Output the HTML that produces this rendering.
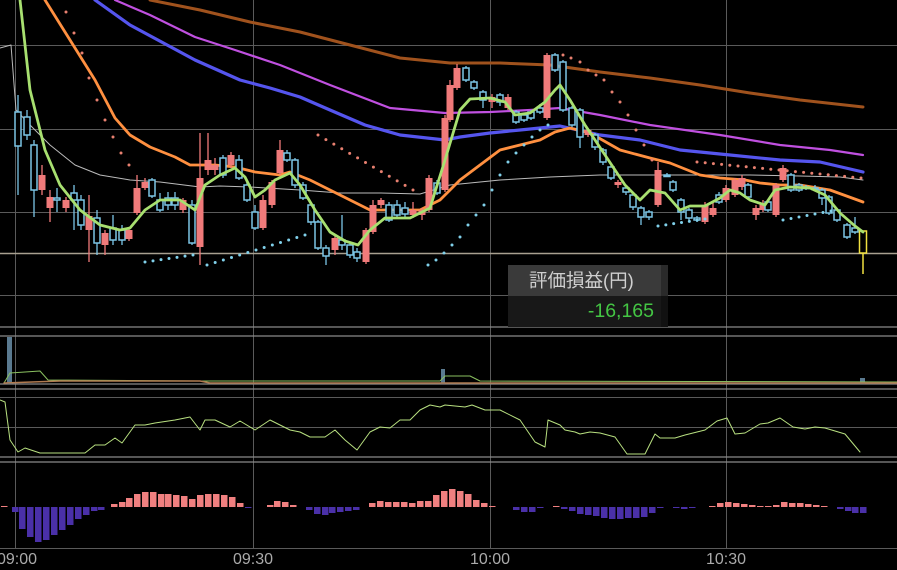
<!DOCTYPE html>
<html><head><meta charset="utf-8"><style>
html,body{margin:0;padding:0;background:#000;width:897px;height:570px;overflow:hidden}
svg{display:block}
.tt{position:absolute;left:508px;top:265px;width:160px;font-family:"Liberation Sans","Noto Sans CJK JP",sans-serif}
.tt .h{background:#3a3a3a;color:#d0d0d0;font-size:18.5px;height:31px;line-height:31px;padding-left:21px;border-right:7px solid #2a2a2a;white-space:nowrap}
.tt .v{background:#181818;color:#44c644;font-size:19.5px;height:31px;line-height:31px;text-align:right;padding-right:7px;border-right:7px solid #111}
</style></head><body>
<svg id="s" width="897" height="570" xmlns="http://www.w3.org/2000/svg">
<g stroke="#5a5a5a" stroke-width="1">
<line x1="15.5" y1="0" x2="15.5" y2="548"/><line x1="253.5" y1="0" x2="253.5" y2="548"/>
<line x1="490.5" y1="0" x2="490.5" y2="548"/><line x1="726.5" y1="0" x2="726.5" y2="548"/>
<line x1="0" y1="45.5" x2="897" y2="45.5"/><line x1="0" y1="129.5" x2="897" y2="129.5"/>
<line x1="0" y1="212.5" x2="897" y2="212.5"/><line x1="0" y1="295.5" x2="897" y2="295.5"/>
<line x1="0" y1="397.5" x2="897" y2="397.5"/><line x1="0" y1="427.5" x2="897" y2="427.5"/>
<line x1="0" y1="548.5" x2="897" y2="548.5"/>
</g>
<g stroke="#8a8a8a" stroke-width="1.2">
<line x1="0" y1="327" x2="897" y2="327"/><line x1="0" y1="336" x2="897" y2="336"/>
<line x1="0" y1="384" x2="897" y2="384"/><line x1="0" y1="389" x2="897" y2="389"/>
<line x1="0" y1="457" x2="897" y2="457"/><line x1="0" y1="462" x2="897" y2="462"/>
</g>
<line x1="0" y1="253.5" x2="897" y2="253.5" stroke="#a8a090" stroke-width="1.5"/>
<g id="main"></g>
<g font-family="Liberation Sans,sans-serif" font-size="16" fill="#aaa" text-anchor="middle">
<text x="17" y="564">09:00</text><text x="253" y="564">09:30</text><text x="490" y="564">10:00</text><text x="726" y="564">10:30</text>
</g>
</svg>
<div class="tt"><div class="h">評価損益(円)</div><div class="v">-16,165</div></div>
<script>
var g=document.getElementById('main'),h='';
function pl(p,c,w){h+='<polyline fill="none" stroke="'+c+'" stroke-width="'+w+'" stroke-linejoin="round" stroke-linecap="round" points="'+p.map(function(a){return a.join(',')}).join(' ')+'"/>';}
pl([[0,48],[11,45],[16,110],[30,125],[50,145],[75,165],[100,175],[130,180],[160,182],[200,187],[220,186],[250,187],[300,190],[340,193],[380,193],[420,194],[450,185],[500,180],[550,177],[600,175],[650,175],[700,175],[750,175],[800,176],[840,177],[863,180]],'#bbb',1);
pl([[150,0],[200,10],[250,22],[300,32],[350,45],[400,58],[450,63],[500,63],[550,65],[600,72],[650,78],[700,85],[750,93],[800,100],[863,107]],'#a0521d',3);
pl([[115,0],[150,15],[195,37],[235,50],[280,65],[330,85],[390,108],[445,113],[490,112],[530,110],[560,108],[600,115],[650,125],[720,135],[780,145],[830,150],[863,155]],'#c050e0',2.2);
pl([[95,0],[130,25],[195,60],[240,80],[270,88],[300,97],[330,110],[365,125],[400,135],[445,140],[460,137],[490,133],[520,130],[540,128],[560,126],[600,135],[640,140],[680,150],[730,155],[780,160],[820,162],[863,172]],'#5555ee',3.2);
pl([[45,0],[70,40],[95,80],[115,118],[130,135],[150,147],[175,157],[190,165],[215,165],[235,167],[255,172],[280,175],[290,172],[310,180],[330,190],[350,200],[370,210],[400,210],[420,210],[440,200],[460,180],[480,165],[500,150],[520,145],[540,140],[555,132],[570,128],[590,133],[620,150],[650,158],[670,163],[700,175],[720,178],[745,180],[760,183],[780,185],[800,185],[830,190],[863,202]],'#ff9040',2.8);
var C=[[18,146,112,95,195,0],[27,135,117,110,140,0],[34,145,190,140,217,0],[42,190,175,165,195,1],[50,208,197,190,222,1],[57,198,200,188,212,0],[66,208,200,197,212,1],[74,193,200,185,230,0],[81,200,225,195,230,0],[89,230,216,195,262,1],[97,218,243,210,255,0],[105,245,233,230,255,1],[113,228,240,215,245,0],[122,230,240,225,245,0],[129,239,230,228,241,1],[137,213,188,175,215,1],[145,188,182,178,190,1],[152,180,196,178,198,0],[160,200,210,193,212,0],[168,198,205,192,210,0],[175,198,205,192,210,0],[183,210,200,198,213,1],[192,205,243,200,245,0],[200,247,178,133,265,1],[208,170,160,133,175,1],[215,170,165,158,175,1],[223,158,175,155,178,0],[231,165,155,152,168,1],[239,160,178,155,180,0],[247,185,200,182,202,0],[255,212,228,205,230,0],[263,228,200,195,230,1],[272,205,182,180,208,1],[280,173,150,140,175,1],[287,153,160,150,162,0],[295,160,185,158,188,0],[303,185,198,182,200,0],[311,205,222,202,225,0],[318,222,248,220,250,0],[326,248,256,245,265,0],[335,250,238,235,255,1],[342,240,245,215,250,0],[350,245,255,242,258,0],[357,252,258,248,262,0],[366,262,230,228,264,1],[373,232,205,200,234,1],[381,205,200,198,208,1],[389,205,220,202,222,0],[397,205,215,200,218,0],[405,208,214,202,218,0],[413,215,210,202,218,1],[422,215,210,208,220,1],[429,210,178,175,212,1],[437,183,193,180,195,0],[445,190,118,115,192,1],[450,120,85,80,122,1],[457,88,68,64,90,1],[466,68,80,66,82,0],[474,82,88,80,90,0],[483,92,100,90,108,0],[492,102,97,94,108,1],[500,95,102,93,106,0],[508,108,97,94,110,1],[516,112,122,110,124,0],[524,115,120,113,122,0],[531,112,118,110,120,0],[540,108,112,104,114,0],[547,118,55,53,120,1],[555,55,70,53,72,0],[563,62,110,60,112,0],[572,108,125,106,127,0],[580,110,137,108,148,0],[588,135,130,128,137,1],[595,135,147,133,150,0],[603,150,162,148,165,0],[611,167,178,165,180,0],[618,185,182,180,188,1],[626,188,192,185,195,0],[633,195,207,193,210,0],[641,208,217,206,225,0],[649,212,217,210,220,0],[658,205,170,162,207,1],[667,175,175,173,177,0],[673,182,190,180,192,0],[681,200,212,198,220,0],[689,210,218,208,220,0],[697,218,220,216,222,0],[705,222,205,202,224,1],[713,215,208,203,217,1],[719,195,202,192,204,0],[726,200,188,185,202,1],[735,195,180,178,197,1],[742,187,178,175,190,1],[748,185,197,183,199,0],[756,215,208,205,220,1],[763,210,203,200,212,1],[768,202,210,200,212,0],[776,215,185,183,217,1],[783,180,168,165,182,1],[791,175,190,173,192,0],[799,185,190,183,192,0],[806,187,188,185,190,0],[815,188,188,185,190,0],[822,190,198,188,205,0],[829,197,213,195,215,0],[837,210,220,208,222,0],[847,225,237,223,239,0],[855,228,232,217,234,0]];
C.forEach(function(c){var x=c[0],t=Math.min(c[1],c[2]),b=Math.max(c[1],c[2]);if(b-t<1.5)b=t+1.5;
var col=c[5]?'#f07a7a':'#7cc6e6';
h+='<line x1="'+x+'" y1="'+c[4]+'" x2="'+x+'" y2="'+c[3]+'" stroke="'+col+'" stroke-width="1.3"/>';
if(c[5])h+='<rect x="'+(x-3.5)+'" y="'+t+'" width="7" height="'+(b-t)+'" fill="'+col+'"/>';
else h+='<rect x="'+(x-3)+'" y="'+t+'" width="6" height="'+(b-t)+'" fill="#000" stroke="'+col+'" stroke-width="1.5"/>';});
h+='<line x1="863" y1="231" x2="863" y2="274" stroke="#f0e040" stroke-width="1.5"/><rect x="859.5" y="231" width="7" height="22" fill="#000" stroke="#f0e040" stroke-width="1.5"/>';
pl([[20,0],[30,90],[45,150],[60,185],[80,210],[100,225],[120,230],[130,228],[145,210],[160,200],[180,200],[195,210],[205,185],[220,175],[235,168],[245,177],[255,197],[265,190],[275,180],[290,173],[300,185],[315,210],[330,232],[345,241],[358,245],[370,230],[385,218],[410,218],[430,208],[445,160],[460,110],[470,99],[490,98],[505,102],[515,115],[530,113],[545,102],[555,90],[560,85],[570,100],[585,125],[605,155],[625,185],[640,200],[650,190],[665,193],[680,210],[690,206],[705,206],[720,198],[730,190],[740,193],[750,200],[765,205],[775,190],[790,187],[810,188],[825,195],[840,213],[855,226],[863,232]],'#a8e070',2.8);
function dots(x0,y0,x1,y1,n,c){for(var i=0;i<n;i++){var t=n>1?i/(n-1):0;h+='<circle cx="'+(x0+(x1-x0)*t)+'" cy="'+(y0+(y1-y0)*t)+'" r="1.5" fill="'+c+'"/>';}}
var P='#e88070',B='#80d0ea';
[[66,12],[74,33],[82,53],[89,78],[97,100],[105,120],[113,137],[121,153],[129,165]].forEach(function(p){dots(p[0],p[1],p[0],p[1],1,P)});
dots(318,135,413,190,13,P);dots(145,262,193,255,7,B);dots(207,265,305,235,13,B);
[[428,265],[436,260],[444,253],[452,245],[460,237],[468,225],[476,215],[484,205],[492,190],[500,175],[508,162],[516,153],[524,145],[532,137],[540,130],[548,125]].forEach(function(p){dots(p[0],p[1],p[0],p[1],1,B)});
[[563,55],[571,58],[580,62],[588,70],[596,75],[604,80],[612,92],[620,102],[628,115],[636,130],[644,145],[652,160]].forEach(function(p){dots(p[0],p[1],p[0],p[1],1,P)});
dots(697,162,861,178,21,P);dots(658,226,705,219,7,B);dots(783,220,831,211,7,B);
h+='<rect x="7" y="337" width="5" height="47" fill="#5a7a90"/><rect x="441" y="369" width="4" height="15" fill="#5a7a90"/><rect x="860" y="378" width="5" height="6" fill="#5a7a90"/>';
pl([[4,383],[10,373],[40,371],[48,380],[200,381],[440,381],[445,376],[470,376],[480,381],[897,382]],'#8ac060',1);
pl([[4,383],[60,381],[200,381],[210,383],[897,383]],'#b07a50',1.5);
pl([[0,400],[5,402],[10,440],[18,452],[25,448],[40,453],[85,453],[95,445],[105,445],[115,438],[122,443],[135,425],[145,425],[155,423],[175,420],[190,417],[200,430],[205,420],[215,420],[230,427],[240,421],[255,430],[270,420],[290,430],[300,432],[310,437],[325,437],[335,430],[345,440],[357,450],[370,432],[380,427],[390,428],[400,420],[410,420],[420,410],[430,405],[440,407],[445,405],[465,407],[472,405],[485,410],[500,410],[520,420],[535,442],[545,447],[548,420],[560,425],[565,430],[575,432],[580,434],[590,432],[600,433],[615,437],[627,454],[645,454],[655,434],[660,438],[675,438],[685,435],[705,430],[717,421],[727,418],[735,434],[745,433],[760,424],[768,423],[780,418],[793,427],[805,429],[815,427],[825,428],[845,434],[860,452]],'#b8e080',1);
var M=[[4,1],[15,-5],[22,-22],[30,-30],[38,-35],[46,-33],[54,-28],[62,-23],[70,-18],[78,-12],[86,-8],[94,-4],[101,-3],[114,3],[122,5],[129,9],[137,13],[145,15],[153,15],[161,13],[168,13],[176,12],[184,11],[192,8],[200,12],[208,13],[216,13],[224,12],[232,10],[240,4],[248,-1],[270,2],[277,6],[285,5],[293,2],[309,-3],[317,-7],[325,-8],[332,-6],[340,-5],[348,-4],[356,-3],[372,4],[380,6],[388,5],[396,5],[404,5],[412,4],[420,6],[428,6],[436,12],[444,16],[452,18],[460,16],[468,13],[476,7],[484,4],[492,1],[516,-3],[524,-5],[532,-5],[540,-1],[556,1],[564,-2],[572,-4],[580,-7],[588,-8],[596,-9],[604,-11],[612,-12],[620,-12],[628,-11],[636,-11],[644,-10],[652,-6],[660,-1],[676,-1],[684,-2],[692,-1],[712,1],[720,4],[728,5],[736,4],[744,3],[752,2],[760,1],[768,1],[776,2],[784,5],[792,4],[800,4],[808,3],[816,2],[824,1],[840,-2],[848,-4],[855,-6],[863,-6]];
M.forEach(function(m){var v=m[1];if(v>0)h+='<rect x="'+(m[0]-3)+'" y="'+(507-v)+'" width="6.5" height="'+v+'" fill="#f08080"/>';else h+='<rect x="'+(m[0]-3)+'" y="507" width="6.5" height="'+(-v)+'" fill="#4a30a8"/>';});
g.innerHTML=h;
</script>
</body></html>
